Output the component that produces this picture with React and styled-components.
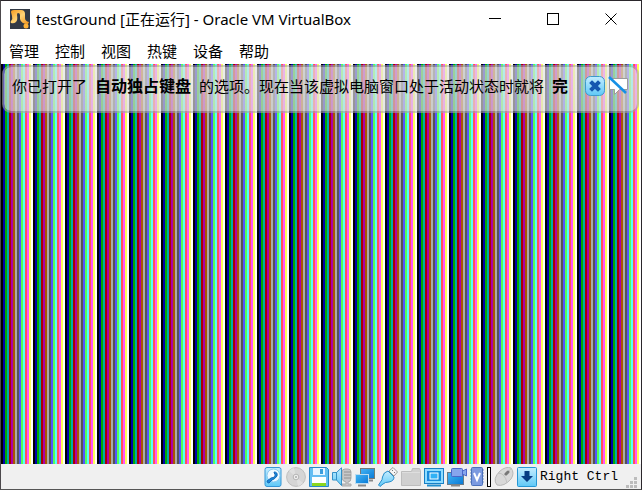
import React from "react";
import styled, { createGlobalStyle } from "styled-components";

const GlobalStyle = createGlobalStyle`
  * { box-sizing: border-box; }
  html, body, #root { height: 100%; margin: 0; }
  body { background: #fff; color: #000; }
  button { font: inherit; color: inherit; border: 0; padding: 0; margin: 0; background: none; }
  svg { display: block; }
`;

const VGA = [
  "#000000", "#0000aa", "#00aa00", "#00aaaa", "#aa0000", "#aa00aa", "#aa5500", "#aaaaaa",
  "#555555", "#5555ff", "#55ff55", "#55ffff", "#ff5555", "#ff55ff", "#ffff55", "#ffffff",
];
const stripes = VGA.map((c, i) => `${c} ${i * 2}px ${i * 2 + 2}px`).join(", ");

const Window = styled.div`
  height: 100vh;
  display: flex;
  flex-direction: column;
  border: 1px solid #2a262b;
  border-left-color: #4c494c;
  border-bottom-color: #555;
  background: #fff;
  font-family: "Noto Sans", "Noto Sans CJK SC", sans-serif;
`;

const TitleBar = styled.header`
  display: flex;
  align-items: center;
  height: 36px;
  flex: none;
  padding: 0 1px 0 9px;
  gap: 6px;
`;

const Title = styled.h1`
  flex: 1;
  margin: 0;
  font-size: 15px;
  line-height: 20px;
  font-weight: 400;
  white-space: nowrap;
`;

const WindowControls = styled.div`
  display: flex;
`;

const WindowButton = styled.button`
  width: 58px;
  height: 36px;
  display: grid;
  place-items: center;
`;

const MenuBar = styled.nav`
  display: flex;
  gap: 16px;
  height: 27px;
  flex: none;
  padding-left: 8px;
`;

const MenuItem = styled.button`
  font-family: "Noto Sans CJK SC", sans-serif;
  font-size: 15px;
  line-height: 26px;
`;

const Screen = styled.main`
  flex: 1;
  min-height: 0;
  padding: 1px 2px 0 1px;
  background: repeating-linear-gradient(90deg, ${stripes});
`;

const Notice = styled.section`
  display: flex;
  align-items: center;
  height: 48px;
  padding: 0 9px 7px 8px;
  border: 2px solid rgba(165, 165, 170, 0.6);
  border-radius: 9px;
  background: linear-gradient(rgba(226, 226, 226, 0.69), rgba(218, 218, 218, 0.69)) padding-box;
`;

const NoticeText = styled.p`
  flex: 1;
  margin: 0;
  font-family: "Noto Sans CJK SC", sans-serif;
  font-size: 15px;
  line-height: 20px;
  white-space: nowrap;
`;

const Strong = styled.strong`
  font-size: 16px;
  margin: 0 ${(p) => (p.$last ? "0" : "8px")} 0 8px;
`;

const NoticeButton = styled.button`
  width: 20px;
  height: 20px;
  margin-left: 3px;
`;

const StatusBar = styled.footer`
  display: flex;
  align-items: center;
  justify-content: flex-end;
  flex: none;
  height: 25px;
  gap: 3px;
  padding-right: 4px;
  background: #f0f0f0;
`;

const StatusButton = styled.button`
  width: ${(p) => (p.$narrow ? "14px" : "20px")};
  height: 20px;
  flex: none;
`;

const LoadMeter = styled.div`
  width: 4px;
  height: 20px;
  border: 1px solid #000;
  background: #fff;
`;

const HostKey = styled.span`
  font-family: "Liberation Mono", monospace;
  font-size: 13px;
  line-height: 20px;
  white-space: nowrap;
`;

const Grip = styled.svg`
  align-self: flex-end;
  margin: 0 0 1px 5px;
`;

const AppIcon = () => (
  <svg width="20" height="20" viewBox="0 0 20 20" aria-hidden="true">
    <defs>
      <linearGradient id="gold" x1="0" y1="0" x2="1" y2="1">
        <stop offset="0" stopColor="#f79a1c" />
        <stop offset=".5" stopColor="#ffd477" />
        <stop offset="1" stopColor="#f39216" />
      </linearGradient>
    </defs>
    <rect width="20" height="20" fill="#333a46" />
    <path d="M1 3Q1 1 4 1h7q4 0 4 4v4q0 3 4 4l-1 2q-7 0-8-5V6q0-2-2-2-1 0-1 2 1 5-1 7-2 2-5 1-1-1 0-2 2-2 1-5z" fill="url(#gold)" />
    <circle cx="16" cy="17" r="2.500" fill="#ffb238" />
  </svg>
);

const Art = ({ w = 20, children }) => (
  <svg width={w} height="20" viewBox={`0 0 ${w} 20`} aria-hidden="true">{children}</svg>
);

const HiddenDefs = styled.svg`
  position: absolute;
`;

const Gradients = () => (
  <HiddenDefs width="0" height="0" aria-hidden="true">
    <defs>
      <linearGradient id="sky" x1="0" y1="0" x2="0" y2="1">
        <stop offset="0" stopColor="#c4edff" /><stop offset="1" stopColor="#5fc8f7" />
      </linearGradient>
      <linearGradient id="blue" x1="0" y1="0" x2="1" y2="1">
        <stop offset="0" stopColor="#45b5f4" /><stop offset="1" stopColor="#0879d5" />
      </linearGradient>
    </defs>
  </HiddenDefs>
);

const CloseArt = () => (
  <Art>
    <rect x=".5" y=".5" width="19" height="19" rx="5" fill="url(#sky)" stroke="#3d9bcb" />
    <path d="M7 7l6 6M13 7l-6 6" stroke="#1457b0" strokeWidth="4" strokeLinecap="square" />
  </Art>
);

const SilenceArt = () => (
  <Art>
    <path d="M1.500 2.500h18v11h-8l-5 5v-5h-5z" fill="#fff" stroke="#9b9b9b" />
    <path d="M1 1l17 16" stroke="#1590e5" strokeWidth="2.600" />
  </Art>
);

const HardDisk = () => (
  <Art>
    <rect x="2" y=".5" width="16" height="19" rx="2" fill="url(#sky)" stroke="#3596d6" />
    <circle cx="10.500" cy="8.500" r="6.500" fill="#eefaff" stroke="#8bcaf0" />
    <path d="M11 5q4 0 3 4-2 3-5 4l-3 3q-2 0-2-2l4-3q4 0 4-3z" fill="#1787d8" stroke="#1468b8" />
    <circle cx="10" cy="8" r="1.500" fill="#fff" />
  </Art>
);

const Disc = () => (
  <Art>
    <circle cx="10" cy="10" r="9.400" fill="#d5d5d5" stroke="#bebebe" />
    <path d="M10 10L3 4a9 9 0 0 1 5-3zM10 10l7 6a9 9 0 0 1-5 3z" fill="#e0e0e0" />
    <circle cx="10" cy="10" r="2.800" fill="#efefef" stroke="#b5b5b5" />
    <circle cx="10" cy="10" r="1" fill="#aaa" />
  </Art>
);

const Floppy = () => (
  <Art>
    <path d="M.5.500h17l2 2v17H.5z" fill="#64bdf2" stroke="#2788c8" />
    <path d="M4 1h12v7H4z" fill="#e7f6ff" />
    <path d="M11 2h3v5h-3z" fill="#3b9ddc" />
    <path d="M3 10h14v9H3z" fill="#fff" />
    <path d="M3 16h14v3H3z" fill="#8bd620" />
  </Art>
);

const Audio = () => (
  <Art>
    <path d="M10 5q0-3 3-3h3q3 0 3 3v6q0 4-3 4v2h3v2h-9v-2h4v-2q-4-1-4-4z" fill="#c7c7c7" stroke="#aaa" />
    <path d="M12 5h7M12 8h7M12 11h7" stroke="#929292" />
    <path d="M.5 5.500h4L9.500.800V18.500L4.500 13H.5z" fill="url(#sky)" stroke="#3290c8" />
    <path d="M4.500 5v8" stroke="#3290c8" />
  </Art>
);

const Network = () => (
  <Art>
    <path d="M12 13.500h6" stroke="#888" strokeWidth="2" />
    <rect x="5.500" y="1.500" width="14" height="10" fill="url(#blue)" stroke="#777" />
    <rect x=".5" y="7.500" width="13" height="9" fill="url(#blue)" stroke="#bcdcf0" />
    <path d="M3 18.500h8" stroke="#888" strokeWidth="2" />
  </Art>
);

const Usb = () => (
  <Art>
    <path d="M11 4l4-3.500L19.500 5 16 9z" fill="#f5f5f5" stroke="#999" />
    <path d="M14 3l1 1M16 5l1 1" stroke="#777" />
    <path d="M10 4l6 6q0 4-5 5-4 0-6 2l-3 2.500L.5 18l2-3q2-2 2-5 1-5 5.500-6z" fill="url(#sky)" stroke="#268dca" />
  </Art>
);

const Folder = () => (
  <Art>
    <path d="M.5 18.500V4.500h10l1-3h7l1 2v15z" fill="#d0d0d0" stroke="#bdbdbd" />
    <path d="M1 5.500h18" stroke="#dedede" />
  </Art>
);

const Display = () => (
  <Art>
    <rect x=".5" y="1.500" width="19" height="15" fill="#8edcff" stroke="#187fc5" />
    <rect x="3" y="4" width="14" height="10" fill="#168bdc" />
    <rect x="6" y="6" width="8" height="6" fill="#31b1f5" stroke="#fff" />
    <path d="M3 18.500h14" stroke="#208fce" strokeWidth="2" />
  </Art>
);

const Recording = () => (
  <Art>
    <rect x=".5" y="5.500" width="16" height="12" fill="url(#blue)" stroke="#6a7a86" />
    <path d="M4 18.500h9" stroke="#888" strokeWidth="2" />
    <rect x="4.500" y="1.500" width="11" height="8" rx="1" fill="#86a5ed" stroke="#4b67c8" />
    <path d="M15.500 4l4-2v7l-4-2z" fill="#86a5ed" stroke="#4b67c8" />
  </Art>
);

const Features = () => (
  <Art w={14}>
    <path d="M0 3h14M0 6h14M0 9h14M0 12h14M0 15h14" stroke="#7590c0" />
    <rect x="1.500" y=".5" width="11" height="18" rx="1" fill="#7b9ae0" stroke="#4b70ba" />
    <path d="M4 6l3 7 3-7" fill="none" stroke="#fff" strokeWidth="2" />
  </Art>
);

const Mouse = () => (
  <Art>
    <path d="M6 4q6-5 11-3 4 5 0 11-7 8-14 6Q-2 12 6 4z" fill="#d8d8d8" stroke="#b7b7b7" />
    <path d="M4 6q7 0 9 10M9 9l9-8" fill="none" stroke="#c0c0c0" />
    <path d="M12 7l2-2" stroke="#777" strokeWidth="3" strokeLinecap="round" />
  </Art>
);

const Capture = () => (
  <Art>
    <rect x=".5" y=".5" width="19" height="19" rx="1" fill="url(#sky)" stroke="#2596d4" />
    <path d="M7.500 4h5v5H16l-6 6-6-6h3.500z" fill="#073c83" />
  </Art>
);

const devices = [
  ["硬盘", HardDisk], ["光驱", Disc], ["软盘", Floppy], ["音频", Audio], ["网络", Network],
  ["USB", Usb], ["共享文件夹", Folder], ["显示", Display], ["录像", Recording],
];

export default function App() {
  return (
    <Window>
      <GlobalStyle />
      <Gradients />
      <TitleBar>
        <AppIcon />
        <Title>testGround [正在运行] - Oracle VM VirtualBox</Title>
        <WindowControls>
          <WindowButton aria-label="最小化"><svg width="12" height="12"><path d="M0 5.500h12" stroke="#000" /></svg></WindowButton>
          <WindowButton aria-label="最大化"><svg width="12" height="12"><rect x=".5" y=".5" width="11" height="11" fill="none" stroke="#000" /></svg></WindowButton>
          <WindowButton aria-label="关闭"><svg width="12" height="12"><path d="M.5.500l11 11M11.500.500l-11 11" stroke="#000" /></svg></WindowButton>
        </WindowControls>
      </TitleBar>
      <MenuBar>
        {["管理", "控制", "视图", "热键", "设备", "帮助"].map((m) => <MenuItem key={m}>{m}</MenuItem>)}
      </MenuBar>
      <Screen>
        <Notice>
          <NoticeText>
            你已打开了<Strong>自动独占键盘</Strong>的选项。现在当该虚拟电脑窗口处于活动状态时就将<Strong $last>完</Strong>
          </NoticeText>
          <NoticeButton aria-label="关闭"><CloseArt /></NoticeButton>
          <NoticeButton aria-label="不再显示"><SilenceArt /></NoticeButton>
        </Notice>
      </Screen>
      <StatusBar>
        {devices.map(([name, Drawing]) => (
          <StatusButton key={name} aria-label={name}><Drawing /></StatusButton>
        ))}
        <StatusButton $narrow aria-label="虚拟化"><Features /></StatusButton>
        <LoadMeter />
        <StatusButton aria-label="鼠标"><Mouse /></StatusButton>
        <StatusButton aria-label="键盘"><Capture /></StatusButton>
        <HostKey>Right Ctrl</HostKey>
        <Grip width="11" height="11" fill="#bcbcbc" aria-hidden="true">
          <path d="M8 0h3v3H8zM4 4h3v3H4zM8 4h3v3H8zM0 8h3v3H0zM4 8h3v3H4zM8 8h3v3H8z" />
        </Grip>
      </StatusBar>
    </Window>
  );
}
